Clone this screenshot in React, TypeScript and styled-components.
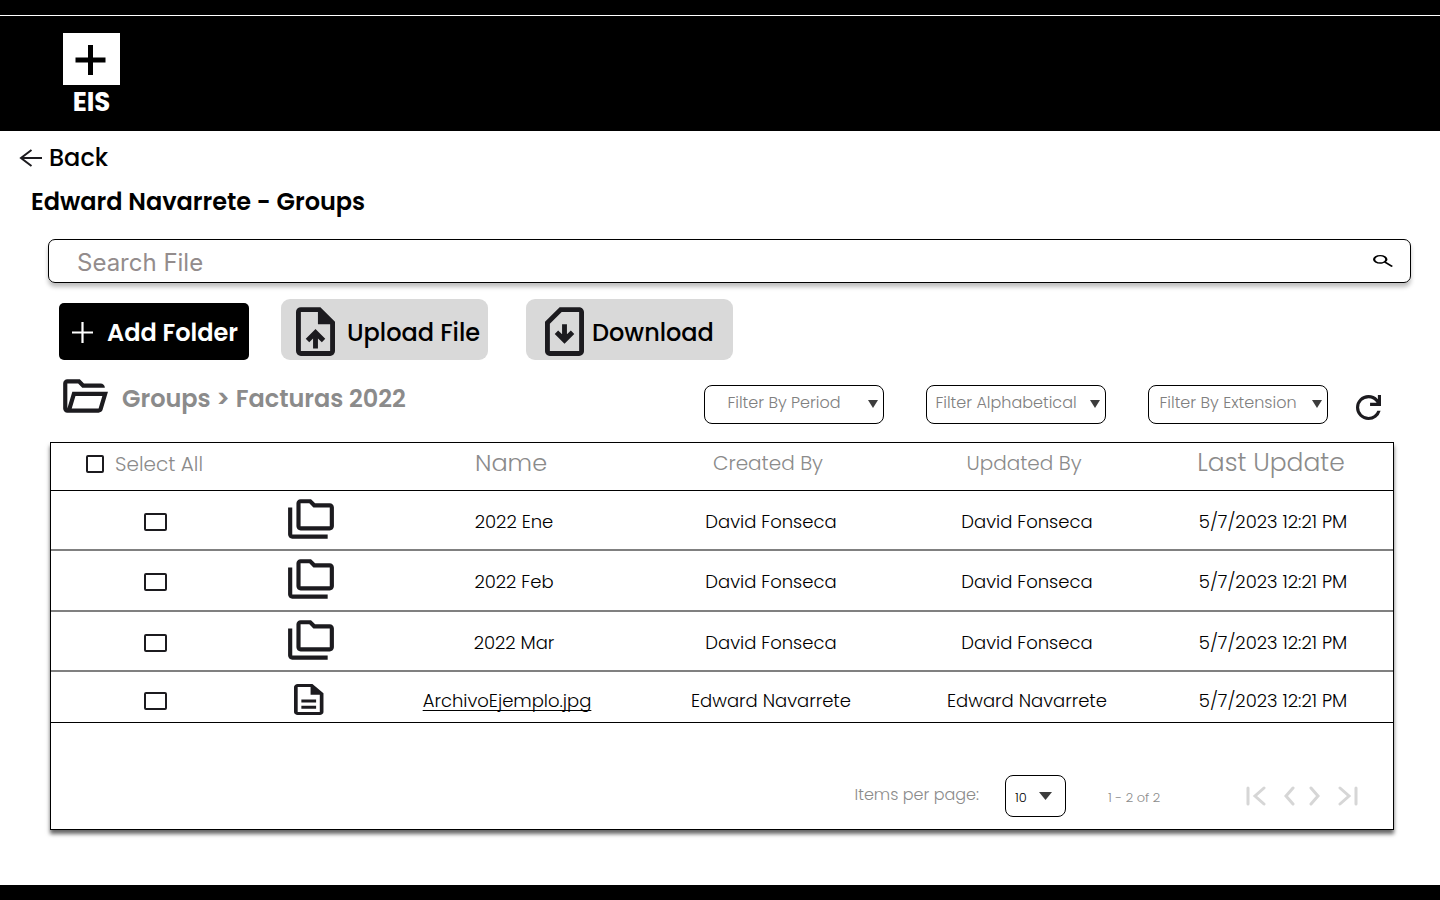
import React from "react";
import styled, { createGlobalStyle } from "styled-components";

const ink = "#1c1b1f";
const muted = "#8b8b8b";

const GlobalStyle = createGlobalStyle`
  *, *::before, *::after { box-sizing: border-box; }
  body { margin: 0; background: #fff; color: #000; }
  body, button, input, select { font-family: Poppins, Inter, "Liberation Sans", sans-serif; }
  svg { display: block; flex: none; }
`;

const Page = styled.div`
  min-height: 100vh;
  display: flex;
  flex-direction: column;
`;

const TopStrip = styled.div`
  height: 16px;
  background: #000;
  border-bottom: 1px solid #fff;
`;

const Header = styled.header`
  display: flex;
  height: 115px;
  padding: 17px 63px 0;
  background: #000;
`;

const Brand = styled.a`
  display: flex;
  flex-direction: column;
  align-items: center;
  width: 57px;
  color: #fff;
  font-size: 26px;
  font-weight: 700;
  line-height: 34px;
  text-decoration: none;
`;

const BottomStrip = styled.footer`
  height: 15px;
  margin-top: auto;
  background: #000;
`;

const Main = styled.main`
  padding: 10px 0 48px;
`;

const BackLink = styled.a`
  display: inline-flex;
  align-items: center;
  gap: 7px;
  margin-left: 19px;
  color: #000;
  font-size: 24px;
  font-weight: 500;
  line-height: 34px;
  text-decoration: none;
  vertical-align: top;
`;

const Title = styled.h1`
  margin: 10px 31px 20px;
  font-size: 24px;
  font-weight: 600;
  line-height: 34px;
`;

const SearchBar = styled.form`
  display: flex;
  align-items: center;
  height: 44px;
  margin: 0 29px 0 48px;
  padding: 0 17px 0 28px;
  border: 1px solid #000;
  border-radius: 7px;
  box-shadow: 0 4px 4px rgba(0, 0, 0, 0.25);
`;

const SearchInput = styled.input`
  flex: 1;
  min-width: 0;
  padding: 2px 0 0;
  border: 0;
  outline: 0;
  background: none;
  color: #000;
  font-family: Inter, sans-serif;
  font-size: 24px;
  font-weight: 400;
  &::placeholder { color: #938c8c; opacity: 1; }
`;

const IconButton = styled.button`
  display: flex;
  padding: 0;
  border: 0;
  background: none;
  cursor: pointer;
`;

const RefreshButton = styled(IconButton)`
  padding-top: 6px;
`;

const Actions = styled.div`
  display: flex;
  align-items: flex-end;
  gap: 32px;
  margin: 16px 59px 0;
`;

const ActionGroup = styled.div`
  display: flex;
  gap: 38px;
`;

const AddButton = styled.button`
  display: flex;
  align-items: center;
  gap: 14px;
  width: 190px;
  height: 57px;
  padding: 2px 0 0 13px;
  border: 0;
  border-radius: 5px;
  background: #000;
  color: #fff;
  font-size: 24px;
  font-weight: 600;
  white-space: nowrap;
`;

const FileButton = styled.button<{ $inset: number; $gap: number }>`
  display: flex;
  align-items: center;
  gap: ${(p) => p.$gap}px;
  width: 207px;
  height: 61px;
  padding: 4px 0 0 ${(p) => p.$inset}px;
  border: 0;
  border-radius: 9px;
  background: #d9d9d9;
  color: #000;
  font-size: 24px;
  font-weight: 500;
  white-space: nowrap;
`;

const ButtonText = styled.span`
  padding-top: 2px;
`;

const Toolbar = styled.div`
  display: flex;
  align-items: flex-start;
  justify-content: space-between;
  margin: 11px 59px 0;
`;

const Crumbs = styled.nav`
  display: flex;
  align-items: center;
  gap: 13px;
  color: ${muted};
  font-size: 24px;
  font-weight: 600;
  line-height: 36px;
`;

const CrumbText = styled.span`
  padding-top: 6px;
`;

const Filters = styled.div`
  display: flex;
  align-items: center;
  gap: 42px;
  padding-top: 14px;
`;

const LastFilter = styled.div`
  display: flex;
  align-items: center;
  gap: 28px;
`;

const SelectWrap = styled.span`
  position: relative;
  display: flex;
`;

const SelectArrow = styled.svg<{ $right: number; $top: number }>`
  position: absolute;
  top: ${(p) => p.$top}px;
  right: ${(p) => p.$right}px;
  pointer-events: none;
`;

const Select = styled.select`
  appearance: none;
  width: 180px;
  height: 39px;
  padding: 0 20px 4px 0;
  border: 1px solid #000;
  border-radius: 8px;
  background: #fff;
  color: #808080;
  font-size: 16px;
  font-weight: 300;
  text-align: center;
`;

const SizeSelect = styled(Select)`
  width: 61px;
  height: 42px;
  padding: 2px 0 0 9px;
  color: #000;
  font-size: 13px;
  text-align: left;
`;

const Panel = styled.section`
  display: flex;
  flex-direction: column;
  margin: 18px 46px 0 50px;
  border: 1px solid #000;
  box-shadow: 0 4px 4px rgba(0, 0, 0, 0.6);
`;

const Table = styled.table`
  width: 100%;
  table-layout: fixed;
  border-collapse: separate;
  border-spacing: 0;
`;

const HeadCell = styled.th<{ $size?: number }>`
  height: 48px;
  padding: 0 6px 8px 0;
  border-bottom: 1px solid #000;
  color: ${muted};
  font-size: ${(p) => p.$size ?? 20}px;
  font-weight: 300;
  line-height: 30px;
  text-align: center;
  white-space: nowrap;
  &:last-child { padding-right: 28px; }
`;

const SelectAll = styled.label`
  display: flex;
  align-items: center;
  gap: 11px;
  padding: 3px 0 0 35px;
`;

const Row = styled.tr<{ $height: number; $last?: boolean }>`
  height: ${(p) => p.$height}px;
  & > td {
    padding-top: ${(p) => (p.$last ? 8 : 3)}px;
    border-bottom: ${(p) => (p.$last ? "1px solid #000" : "2px solid #808080")};
  }
`;

const Cell = styled.td`
  padding: 0;
  font-size: 18px;
  font-weight: 300;
  line-height: 28px;
  text-align: center;
  white-space: nowrap;
  &:last-child { padding-right: 24px; }
`;

const IconCell = styled(Cell)`
  & > svg { margin: -4px auto 0; }
`;

const Check = styled.input<{ $wide?: boolean }>`
  appearance: none;
  display: block;
  flex: none;
  width: ${(p) => (p.$wide ? 23 : 18)}px;
  height: 18px;
  margin: 0 auto;
  border: 2px solid ${ink};
  border-radius: 2px;
  background: #fff;
  &:checked { background: ${ink}; }
  ${SelectAll} & { margin: 0; }
`;

const FileLink = styled.a`
  color: #000;
  text-decoration: underline;
  text-decoration-thickness: 1px;
  text-decoration-skip-ink: none;
  text-underline-offset: 3px;
  margin-right: 14px;
`;

const Pager = styled.div`
  display: flex;
  align-items: center;
  justify-content: flex-end;
  height: 106px;
  padding: 40px 35px 0 0;
`;

const SizeLabel = styled.label`
  margin-right: 26px;
  padding-bottom: 4px;
  color: ${muted};
  font-size: 16px;
  font-weight: 300;
`;

const Range = styled.span`
  width: 54px;
  margin: 0 84px 0 42px;
  padding-top: 3px;
  color: ${muted};
  font-size: 13px;
  font-weight: 300;
  white-space: nowrap;
`;

const PageButtons = styled.div<{ $gap: number }>`
  display: flex;
  gap: ${(p) => p.$gap}px;
`;

const docOutline =
  "M6 22q-.825 0-1.412-.587T4 20V4q0-.825.588-1.412T6 2h8l6 6v12q0 .825-.587 1.413T18 22H6Zm7-13V4H6v16h12V9h-5Z";

const Arrow = ({ right, top, w, h }: { right: number; top: number; w: number; h: number }) => (
  <SelectArrow $right={right} $top={top} width={w} height={h} viewBox="0 0 10 8" preserveAspectRatio="none" aria-hidden>
    <path d="M0 0h10L5 8Z" fill="#3c3c3c" />
  </SelectArrow>
);

const FoldersIcon = () => (
  <svg width="50" height="50" viewBox="0 0 24 24" fill={ink} aria-hidden>
    <path d="M3 19h17v2H3c-1.1 0-2-.9-2-2V6h2v13zM23 6v9c0 1.1-.9 2-2 2H7c-1.1 0-2-.9-2-2l.01-11c0-1.1.89-2 1.99-2h5l2 2h7c1.1 0 2 .9 2 2zM7 15h14V6h-7.83l-2-2H7v11z" />
  </svg>
);

const DocIcon = () => (
  <svg width="35" height="31" viewBox="4 2 19 20" preserveAspectRatio="none" fill={ink} aria-hidden>
    <path d={docOutline} />
    <path d="M8 18h8v-2H8v2Zm0-4h8v-2H8v2Z" />
  </svg>
);

const PageIcon = ({ d, w }: { d: string; w: number }) => (
  <svg width={w} height="20" viewBox={`0 0 ${w} 20`} fill="none" stroke="#d6d6d6" strokeWidth="3" strokeLinecap="round" aria-hidden>
    <path d={d} />
  </svg>
);

const filters = ["Filter By Period", "Filter Alphabetical"];

const rows = [
  { name: "2022 Ene", by: "David Fonseca", height: 60 },
  { name: "2022 Feb", by: "David Fonseca", height: 61 },
  { name: "2022 Mar", by: "David Fonseca", height: 60 },
  { name: "ArchivoEjemplo.jpg", by: "Edward Navarrete", height: 51, file: true },
];

const columns = [208, 104, 302, 212, 300, 216];

const FilterSelect = ({ label }: { label: string }) => (
  <SelectWrap>
    <Select aria-label={label}>
      <option>{label}</option>
    </Select>
    <Arrow right={6} top={15} w={10} h={8} />
  </SelectWrap>
);

export default function App() {
  return (
    <Page>
      <GlobalStyle />
      <TopStrip />
      <Header>
        <Brand href="#">
          <svg width="57" height="52" viewBox="0 0 57 52" aria-hidden>
            <path fill="#fff" d="M0 0h57v52H0z" />
            <path d="M27.500 12v30M12.500 27h30" stroke="#000" strokeWidth="5" />
          </svg>
          EIS
        </Brand>
      </Header>
      <Main>
        <BackLink href="#">
          <svg width="23" height="18" viewBox="0 0 23 18" fill="none" stroke={ink} strokeWidth="2" aria-hidden>
            <path d="M23 9H2M12.500 1 2 9l10.500 8" />
          </svg>
          Back
        </BackLink>
        <Title>Edward Navarrete - Groups</Title>
        <SearchBar role="search" onSubmit={(e: React.FormEvent) => e.preventDefault()}>
          <SearchInput type="text" placeholder="Search File" aria-label="Search File" />
          <IconButton type="submit" aria-label="Search">
            <svg width="20" height="12" viewBox="3 3 18 18" preserveAspectRatio="none" aria-hidden>
              <path d="m19.600 21-6.300-6.300q-.75.6-1.725.95T9.500 16q-2.725 0-4.612-1.888T3 9.500q0-2.725 1.888-4.612T9.500 3q2.725 0 4.612 1.888T16 9.500q0 1.100-.35 2.075T14.700 13.300l6.300 6.300-1.400 1.400ZM9.500 14q1.875 0 3.188-1.312T14 9.500q0-1.875-1.312-3.187T9.500 5Q7.625 5 6.313 6.313T5 9.500q0 1.875 1.313 3.188T9.500 14Z" />
            </svg>
          </IconButton>
        </SearchBar>
        <Actions>
          <AddButton type="button">
            <svg width="21" height="21" viewBox="0 0 21 21" stroke="#fff" strokeWidth="2.200" aria-hidden>
              <path d="M10.500 0v21M0 10.500h21" />
            </svg>
            Add Folder
          </AddButton>
          <ActionGroup>
            <FileButton type="button" $inset={15} $gap={12}>
              <svg width="39" height="49" viewBox="4 2 16 20" fill={ink} aria-hidden>
                <path d={docOutline} />
                <path d="M11 19h2v-4.175l1.600 1.600L16 15l-4-4-4 4 1.425 1.400L11 14.825V19Z" />
              </svg>
              <ButtonText>Upload File</ButtonText>
            </FileButton>
            <FileButton type="button" $inset={19} $gap={8}>
              <svg width="39" height="49" viewBox="4 2 16 20" fill={ink} aria-hidden>
                <path d="m12 17 4-4-1.400-1.400-1.600 1.550V9h-2v4.150L9.400 11.600 8 13l4 4Zm6 5H6c-1.100 0-2-.9-2-2V8l6-6h8c1.100 0 2 .9 2 2v16c0 1.100-.9 2-2 2Zm0-2V4h-7.150L6 8.850V20h12Z" />
              </svg>
              <ButtonText>Download</ButtonText>
            </FileButton>
          </ActionGroup>
        </Actions>
        <Toolbar>
          <Crumbs aria-label="Breadcrumb">
            <svg width="50" height="50" viewBox="0 0 24 24" fill={ink} aria-hidden>
              <path d="M4 20q-.825 0-1.412-.587T2 18V6q0-.825.588-1.412T4 4h6l2 2h8q.825 0 1.413.588T22 8H11.175l-2-2H4v12l2.400-8h17.100l-2.575 8.575q-.2.65-.737 1.038T19 20H4Zm2.100-2H19l1.800-6H7.900l-1.800 6Z" />
            </svg>
            <CrumbText>Groups &gt; Facturas 2022</CrumbText>
          </Crumbs>
          <Filters>
            {filters.map((label) => (
              <FilterSelect key={label} label={label} />
            ))}
            <LastFilter>
              <FilterSelect label="Filter By Extension" />
              <RefreshButton type="button" aria-label="Refresh">
                <svg width="25" height="25" viewBox="4 4 16 16" fill={ink} aria-hidden>
                  <path d="M12 20q-3.350 0-5.675-2.325T4 12q0-3.350 2.325-5.675T12 4q1.725 0 3.300.713T18 6.750V4h2v7h-7V9h4.200q-.8-1.400-2.187-2.200T12 6Q9.500 6 7.750 7.750T6 12q0 2.500 1.750 4.250T12 18q1.925 0 3.475-1.100T17.650 14h2.100q-.7 2.650-2.850 4.325T12 20Z" />
                </svg>
              </RefreshButton>
            </LastFilter>
          </Filters>
        </Toolbar>
        <Panel>
          <Table>
            <colgroup>
              {columns.map((width, i) => (
                <col key={i} width={width} />
              ))}
            </colgroup>
            <thead>
              <tr>
                <HeadCell colSpan={2}>
                  <SelectAll>
                    <Check type="checkbox" />
                    Select All
                  </SelectAll>
                </HeadCell>
                <HeadCell $size={24}>Name</HeadCell>
                <HeadCell>Created By</HeadCell>
                <HeadCell>Updated By</HeadCell>
                <HeadCell $size={25}>Last Update</HeadCell>
              </tr>
            </thead>
            <tbody>
              {rows.map((row) => (
                <Row key={row.name} $height={row.height} $last={row.file}>
                  <IconCell>
                    <Check type="checkbox" $wide aria-label={`Select ${row.name}`} />
                  </IconCell>
                  <IconCell>{row.file ? <DocIcon /> : <FoldersIcon />}</IconCell>
                  <Cell>{row.file ? <FileLink href="#">{row.name}</FileLink> : row.name}</Cell>
                  <Cell>{row.by}</Cell>
                  <Cell>{row.by}</Cell>
                  <Cell>5/7/2023 12:21 PM</Cell>
                </Row>
              ))}
            </tbody>
          </Table>
          <Pager>
            <SizeLabel htmlFor="page-size">Items per page:</SizeLabel>
            <SelectWrap>
              <SizeSelect id="page-size">
                <option>10</option>
              </SizeSelect>
              <Arrow right={14} top={17} w={13} h={8} />
            </SelectWrap>
            <Range>1 - 2 of 2</Range>
            <PageButtons $gap={18}>
              <IconButton type="button" aria-label="First page">
                <PageIcon w={20} d="M2 2v16M18 2l-9 8 9 8" />
              </IconButton>
              <PageButtons $gap={14}>
                <IconButton type="button" aria-label="Previous page">
                  <PageIcon w={11} d="M9 2 2 10l7 8" />
                </IconButton>
                <IconButton type="button" aria-label="Next page">
                  <PageIcon w={11} d="m2 2 7 8-7 8" />
                </IconButton>
              </PageButtons>
              <IconButton type="button" aria-label="Last page">
                <PageIcon w={20} d="M18 2v16M2 2l9 8-9 8" />
              </IconButton>
            </PageButtons>
          </Pager>
        </Panel>
      </Main>
      <BottomStrip />
    </Page>
  );
}
